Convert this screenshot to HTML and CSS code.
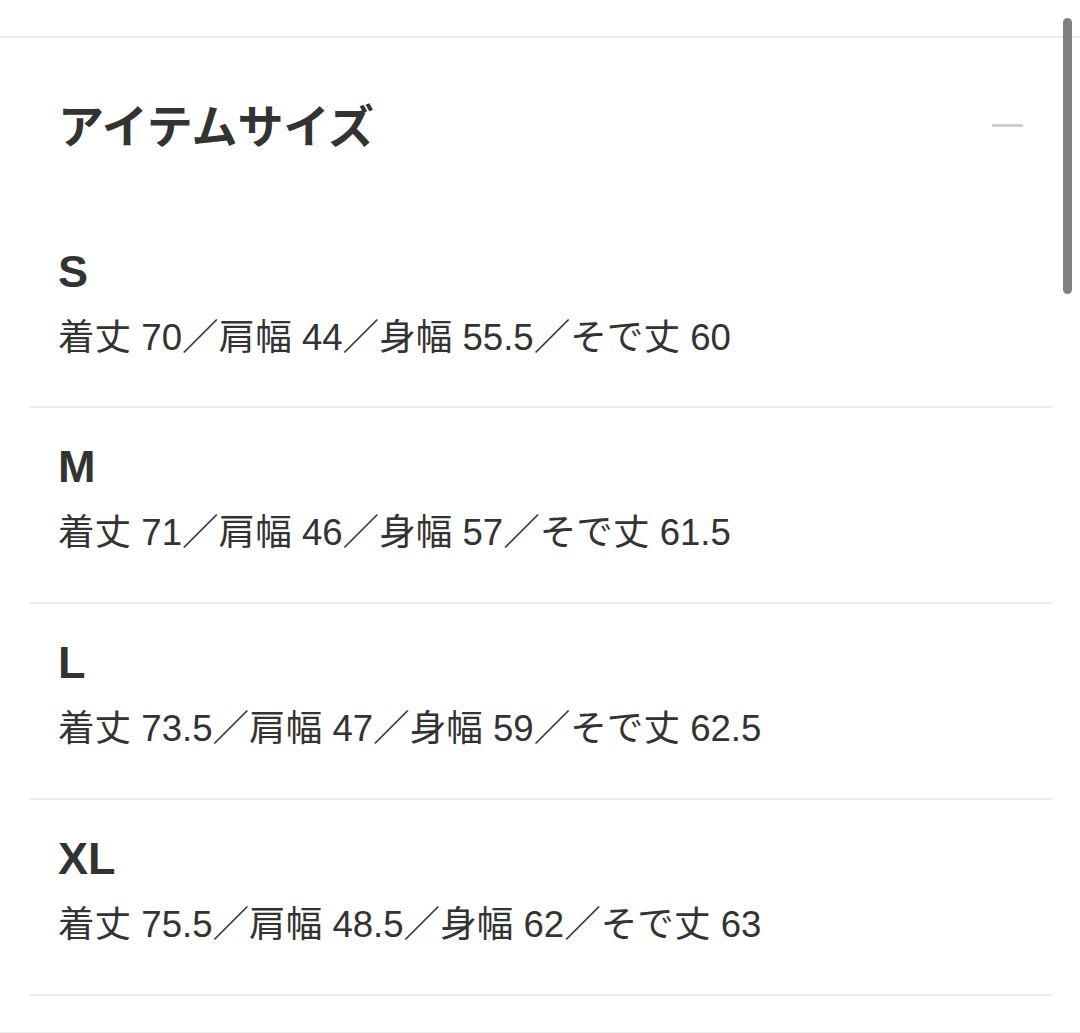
FILE: index.html
```html
<!DOCTYPE html>
<html lang="ja">
<head>
    <meta charset="UTF-8">
    <meta name="viewport" content="width=device-width, initial-scale=1.0">
    <title>アイテムサイズ</title>
    <link rel="stylesheet" href="styles.css">
</head>
<body>
    <div class="top-space"></div>

    <section class="size-panel">
        <div class="panel-header">
            <h2>アイテムサイズ</h2>
            <span class="toggle" aria-label="閉じる"></span>
        </div>

        <ul class="size-list">
            <li class="size-item">
                <h3>S</h3>
                <p>着丈 70／肩幅 44／身幅 55.5／そで丈 60</p>
            </li>
            <li class="size-item">
                <h3>M</h3>
                <p>着丈 71／肩幅 46／身幅 57／そで丈 61.5</p>
            </li>
            <li class="size-item">
                <h3>L</h3>
                <p>着丈 73.5／肩幅 47／身幅 59／そで丈 62.5</p>
            </li>
            <li class="size-item">
                <h3>XL</h3>
                <p>着丈 75.5／肩幅 48.5／身幅 62／そで丈 63</p>
            </li>
        </ul>
    </section>

    <section class="next-panel"></section>

    <div class="scrollbar"></div>
</body>
</html>
```

FILE: styles.css
```css
body {
    margin: 0;
    padding: 0;
    background-color: #fff;
    color: #333;
    font-family: "Liberation Sans", "Noto Sans CJK JP", sans-serif;
    overflow: hidden;
}

.top-space {
    height: 36px;
}

.size-panel {
    border-top: 2px solid #ececec;
}

.panel-header {
    display: flex;
    align-items: center;
    justify-content: space-between;
    padding: 57px 57px 0 58px;
}

.panel-header h2 {
    margin: 0;
    font-family: "Noto Sans CJK JP", sans-serif;
    font-size: 46px;
    font-weight: 700;
    line-height: 56px;
    color: #333;
}

.toggle {
    display: block;
    width: 31px;
    height: 3px;
    margin-top: 4px;
    background-color: #cfcfcf;
}

.size-list {
    list-style: none;
    margin: 95px 28px 0 29px;
    padding: 0;
}

.size-item {
    padding: 33px 0 0 29px;
    height: 161px;
    border-bottom: 2px solid #ececec;
}

.size-item:first-child {
    height: 160px;
    padding-top: 0;
}

.size-item h3 {
    margin: 0;
    font-size: 45px;
    font-weight: 700;
    line-height: 52px;
    color: #333;
}

.size-item p {
    margin: 16px 0 0;
    font-size: 36.6px;
    line-height: 48px;
    color: #333;
}

.next-panel {
    margin-top: 36px;
    border-top: 2px solid #ececec;
    height: 40px;
}

.scrollbar {
    position: fixed;
    top: 18px;
    right: 8px;
    width: 9px;
    height: 276px;
    border-radius: 5px;
    background-color: #808080;
}
```
